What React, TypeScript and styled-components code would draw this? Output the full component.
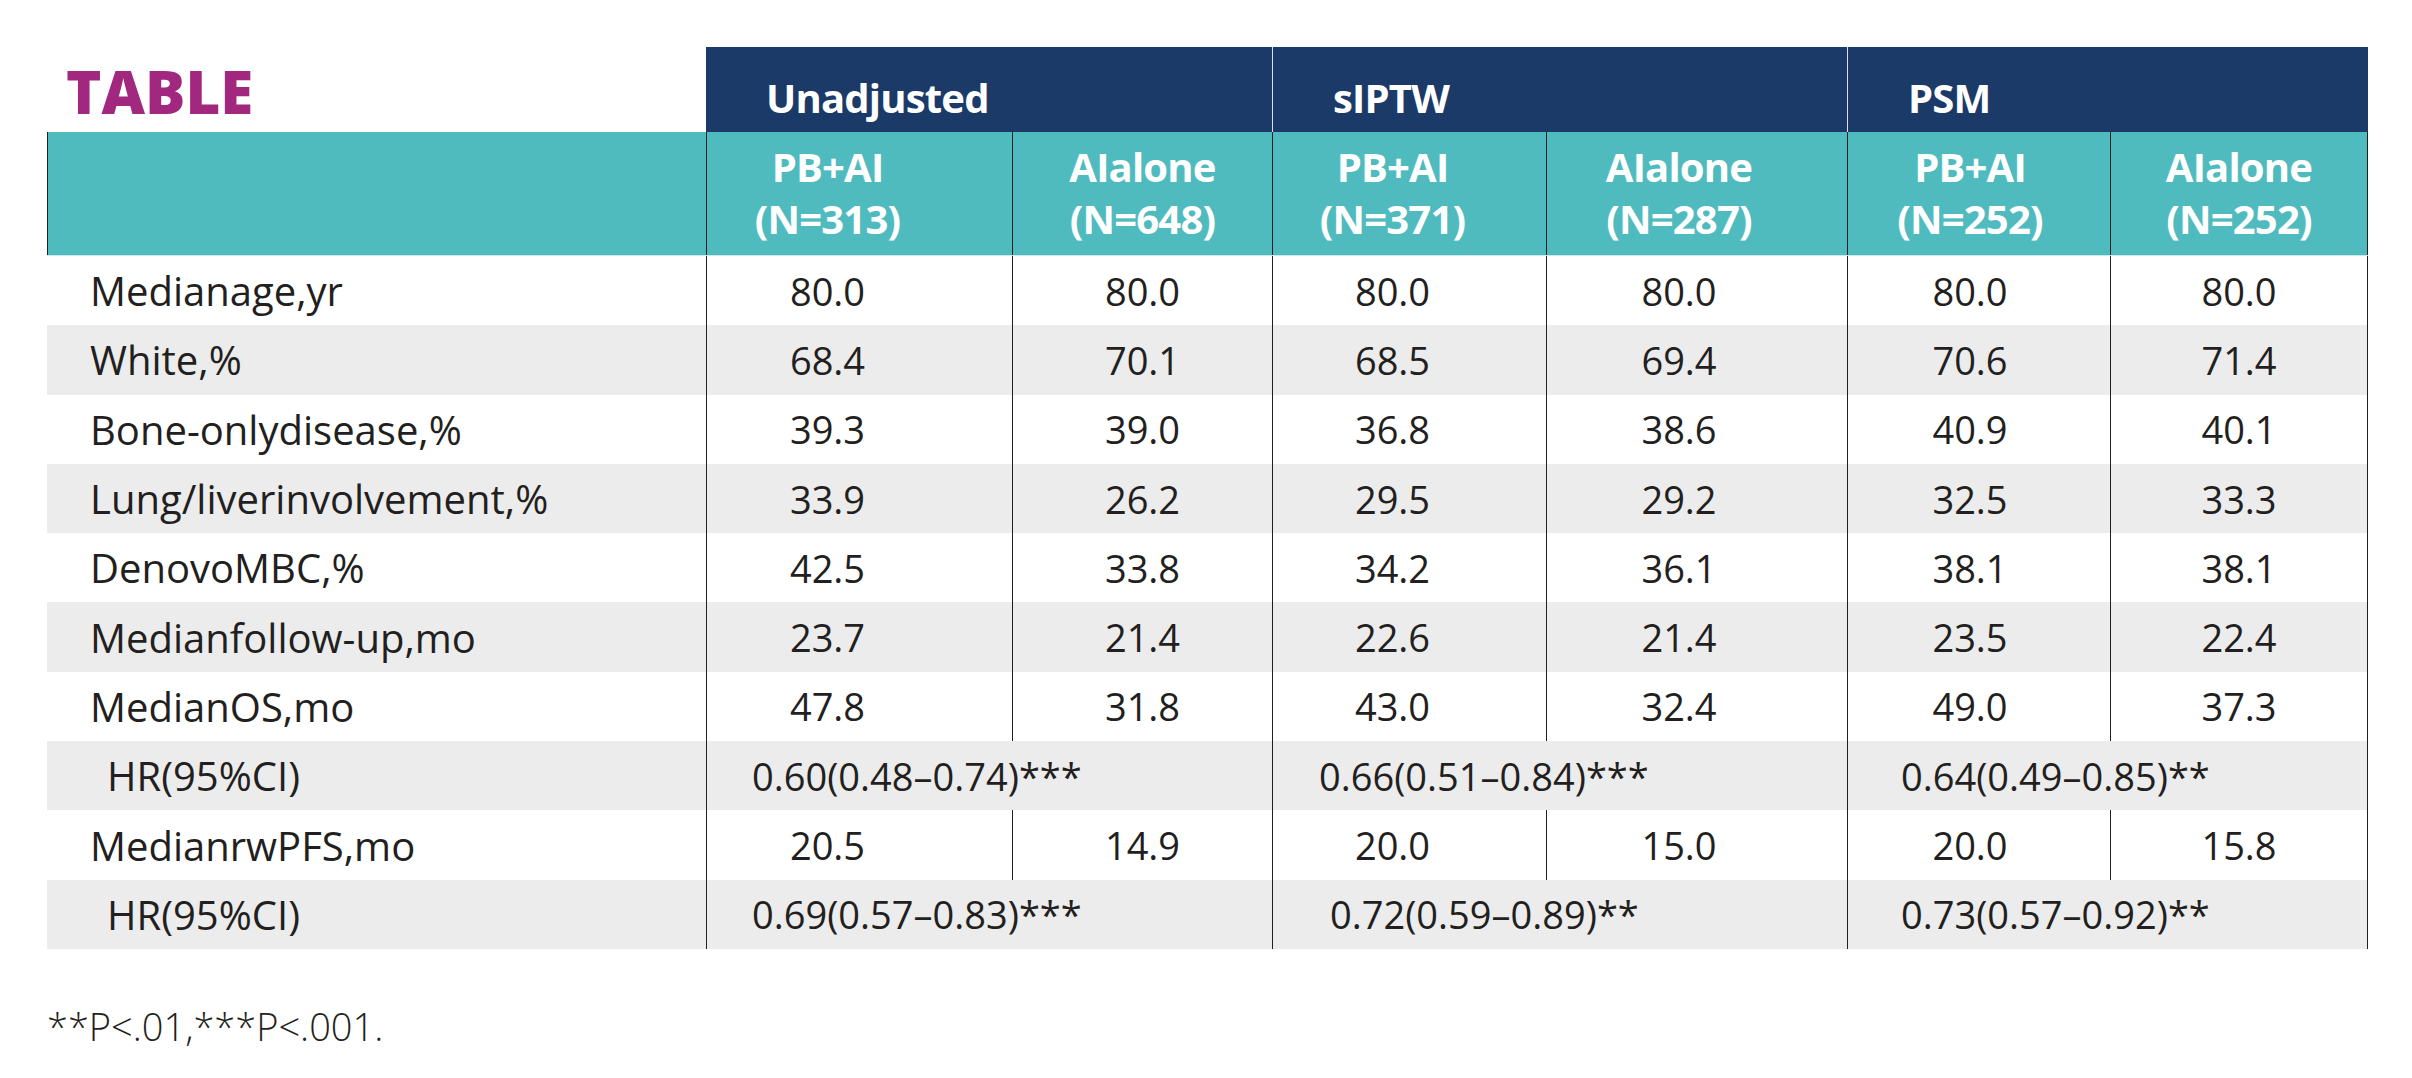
import React from "react";
import styled, { createGlobalStyle } from "styled-components";

const GlobalStyle = createGlobalStyle`
  body {
    margin: 0;
    background: #ffffff;
    font-family: "Open Sans", "Liberation Sans", sans-serif;
    color: #231f20;
  }
`;

const COLUMNS = "659px 306px 260px 274px 301px 263px 258px";
const RULE = "#231f20";

const Wrapper = styled.div`
  padding: 47px 0 0 47px;
`;

const Table = styled.div`
  display: flex;
  flex-direction: column;
  width: 2321px;
`;

const GroupRow = styled.div`
  display: grid;
  grid-template-columns: ${COLUMNS};
  height: 85px;
`;

const TitleCell = styled.div`
  padding: 14px 0 0 19px;
  color: #a2287f;
  font-size: 60px;
  font-weight: 800;
  line-height: 60px;
`;

const GroupCell = styled.div<{ $divider?: boolean }>`
  grid-column: span 2;
  padding: 25px 0 0 60px;
  background: #1b3a68;
  color: #ffffff;
  font-size: 40px;
  font-weight: 700;
  line-height: 52px;
  letter-spacing: -0.8px;
  border-left: ${(p) => (p.$divider ? "1px solid rgba(255,255,255,0.85)" : "none")};
`;

const SubHeadRow = styled.div`
  display: grid;
  grid-template-columns: ${COLUMNS};
  height: 123px;
  background: #4fbbbe;
  border-bottom: 1px solid #c8eaea;
`;

const SubHeadCell = styled.div<{ $shift?: number; $last?: boolean }>`
  padding: 9px ${(p) => p.$shift ?? 0}px 0 0;
  border-left: 1px solid ${RULE};
  border-right: ${(p) => (p.$last ? `1px solid ${RULE}` : "none")};
  color: #ffffff;
  font-size: 40px;
  font-weight: 700;
  line-height: 52px;
  letter-spacing: -0.8px;
  text-align: center;
`;

const BodyRow = styled.div<{ $shade?: boolean }>`
  display: grid;
  grid-template-columns: ${COLUMNS};
  height: 69.3px;
  background: ${(p) => (p.$shade ? "#ebeceb" : "#ffffff")};
`;

const LabelCell = styled.div<{ $indent: number }>`
  display: flex;
  align-items: center;
  padding-left: ${(p) => p.$indent}px;
  font-size: 40px;
  white-space: nowrap;
`;

const ValueCell = styled.div<{ $shift?: number; $last?: boolean }>`
  display: flex;
  align-items: center;
  justify-content: center;
  padding-right: ${(p) => p.$shift ?? 0}px;
  border-left: 1px solid ${RULE};
  border-right: ${(p) => (p.$last ? `1px solid ${RULE}` : "none")};
  font-size: 38px;
`;

const SpanCell = styled.div<{ $indent: number; $last?: boolean }>`
  grid-column: span 2;
  display: flex;
  align-items: center;
  padding-left: ${(p) => p.$indent}px;
  border-left: 1px solid ${RULE};
  border-right: ${(p) => (p.$last ? `1px solid ${RULE}` : "none")};
  font-size: 38px;
  white-space: nowrap;
`;

const Footnote = styled.p`
  margin: 51px 0 0;
  font-size: 38px;
  font-weight: 300;
  line-height: 52px;
  color: #231f20;
`;

// how far each data column's content sits left of the column centre
const shifts = [64, 0, 34, 36, 18, 0];

const groups = ["Unadjusted", "sIPTW", "PSM"];

const subHeads = [
  ["PB+AI", "(N=313)"],
  ["AIalone", "(N=648)"],
  ["PB+AI", "(N=371)"],
  ["AIalone", "(N=287)"],
  ["PB+AI", "(N=252)"],
  ["AIalone", "(N=252)"],
];

type Row =
  | { label: string; values: string[] }
  | { label: string; hr: string[]; indents: number[] };

const rows: Row[] = [
  { label: "Medianage,yr", values: ["80.0", "80.0", "80.0", "80.0", "80.0", "80.0"] },
  { label: "White,%", values: ["68.4", "70.1", "68.5", "69.4", "70.6", "71.4"] },
  { label: "Bone-onlydisease,%", values: ["39.3", "39.0", "36.8", "38.6", "40.9", "40.1"] },
  { label: "Lung/liverinvolvement,%", values: ["33.9", "26.2", "29.5", "29.2", "32.5", "33.3"] },
  { label: "DenovoMBC,%", values: ["42.5", "33.8", "34.2", "36.1", "38.1", "38.1"] },
  { label: "Medianfollow-up,mo", values: ["23.7", "21.4", "22.6", "21.4", "23.5", "22.4"] },
  { label: "MedianOS,mo", values: ["47.8", "31.8", "43.0", "32.4", "49.0", "37.3"] },
  {
    label: "HR(95%CI)",
    hr: ["0.60(0.48–0.74)***", "0.66(0.51–0.84)***", "0.64(0.49–0.85)**"],
    indents: [45, 46, 53],
  },
  { label: "MedianrwPFS,mo", values: ["20.5", "14.9", "20.0", "15.0", "20.0", "15.8"] },
  {
    label: "HR(95%CI)",
    hr: ["0.69(0.57–0.83)***", "0.72(0.59–0.89)**", "0.73(0.57–0.92)**"],
    indents: [45, 57, 53],
  },
];

export default function App() {
  return (
    <Wrapper>
      <GlobalStyle />
      <Table>
        <GroupRow>
          <TitleCell>TABLE</TitleCell>
          {groups.map((g, i) => (
            <GroupCell key={g} $divider={i > 0}>
              {g}
            </GroupCell>
          ))}
        </GroupRow>
        <SubHeadRow>
          <SubHeadCell />
          {subHeads.map((h, i) => (
            <SubHeadCell key={i} $shift={shifts[i]} $last={i === subHeads.length - 1}>
              {h[0]}
              <br />
              {h[1]}
            </SubHeadCell>
          ))}
        </SubHeadRow>
        {rows.map((row, r) => (
          <BodyRow key={r} $shade={r % 2 === 1}>
            {"values" in row ? (
              <>
                <LabelCell $indent={43}>{row.label}</LabelCell>
                {row.values.map((v, i) => (
                  <ValueCell key={i} $shift={shifts[i]} $last={i === row.values.length - 1}>
                    {v}
                  </ValueCell>
                ))}
              </>
            ) : (
              <>
                <LabelCell $indent={60}>{row.label}</LabelCell>
                {row.hr.map((v, i) => (
                  <SpanCell key={i} $indent={row.indents[i]} $last={i === row.hr.length - 1}>
                    {v}
                  </SpanCell>
                ))}
              </>
            )}
          </BodyRow>
        ))}
      </Table>
      <Footnote>**P&lt;.01,***P&lt;.001.</Footnote>
    </Wrapper>
  );
}
